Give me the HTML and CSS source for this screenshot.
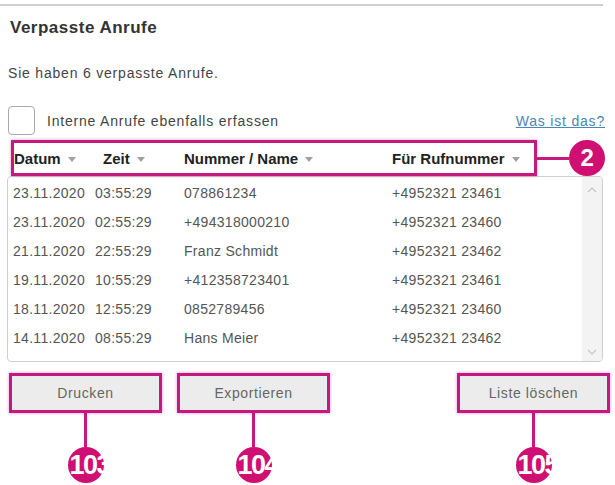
FILE: index.html
```html
<!DOCTYPE html>
<html lang="de">
<head>
    <meta charset="UTF-8">
    <meta name="viewport" content="width=device-width, initial-scale=1.0">
    <title>Verpasste Anrufe</title>
    <link rel="stylesheet" href="styles.css">
</head>
<body>
    <div class="topline"></div>
    <div class="screen">
        <h1 class="title">Verpasste Anrufe</h1>
        <p class="info">Sie haben 6 verpasste Anrufe.</p>

        <div class="optionRow">
            <label class="option"><span class="checkbox"></span>Interne Anrufe ebenfalls erfassen</label>
            <a class="help" href="#">Was ist das?</a>
        </div>

        <!-- table header with callout 2 -->
        <div class="headRow">
            <div class="tableHead">
                <span class="col">Datum<i class="sort"></i></span>
                <span class="col">Zeit<i class="sort"></i></span>
                <span class="col">Nummer / Name<i class="sort"></i></span>
                <span class="col">Für Rufnummer<i class="sort"></i></span>
            </div>
            <div class="hline"></div>
            <div class="badge">2</div>
        </div>

        <div class="list">
            <div class="rows">
                <div class="row"><span>23.11.2020</span><span>03:55:29</span><span>078861234</span><span>+4952321 23461</span></div>
                <div class="row"><span>23.11.2020</span><span>02:55:29</span><span>+494318000210</span><span>+4952321 23460</span></div>
                <div class="row"><span>21.11.2020</span><span>22:55:29</span><span>Franz Schmidt</span><span>+4952321 23462</span></div>
                <div class="row"><span>19.11.2020</span><span>10:55:29</span><span>+412358723401</span><span>+4952321 23461</span></div>
                <div class="row"><span>18.11.2020</span><span>12:55:29</span><span>0852789456</span><span>+4952321 23460</span></div>
                <div class="row"><span>14.11.2020</span><span>08:55:29</span><span>Hans Meier</span><span>+4952321 23462</span></div>
            </div>
            <div class="scrollbar">
                <svg class="chev" width="10" height="6" viewBox="0 0 10 6"><path d="M1 5 L5 1 L9 5" fill="none" stroke="#c4c4c4" stroke-width="1.2"/></svg>
                <svg class="chev" width="10" height="6" viewBox="0 0 10 6"><path d="M1 1 L5 5 L9 1" fill="none" stroke="#c4c4c4" stroke-width="1.2"/></svg>
            </div>
        </div>

        <div class="actions">
            <div class="action print">
                <button class="btn">Drucken</button>
                <div class="stem"></div>
                <div class="badge small">103</div>
            </div>
            <div class="action export">
                <button class="btn">Exportieren</button>
                <div class="stem"></div>
                <div class="badge small">104</div>
            </div>
            <div class="action clear">
                <button class="btn">Liste löschen</button>
                <div class="stem"></div>
                <div class="badge small">105</div>
            </div>
        </div>
    </div>
</body>
</html>
```

FILE: styles.css
```css
body{
    margin: 0;
    background: #fff;
    font-family: "Liberation Sans", Arial, sans-serif;
    color: #444;
}
.topline{
    height: 2px;
    margin: 4px 12px 0 0;
    background: #cfcfcf;
}
.screen{
    padding: 0 10px 0 8px;
}
.title{
    margin: 12px 0 0 2px;
    font-size: 17px;
    line-height: 20px;
    letter-spacing: 0.5px;
    font-weight: bold;
    color: #333;
}
.info{
    margin: 26px 0 0 0;
    font-size: 14px;
    line-height: 18px;
    letter-spacing: 0.8px;
}

.optionRow{
    margin-top: 24px;
    height: 29px;
    display: flex;
    align-items: center;
    justify-content: space-between;
}
.option{
    display: flex;
    align-items: center;
    font-size: 14px;
    letter-spacing: 0.8px;
}
.checkbox{
    width: 25px;
    height: 27px;
    border: 1px solid #aaa;
    border-radius: 4px;
    background: #fff;
    margin-right: 12px;
}
.help{
    font-size: 14px;
    color: #4a87b3;
    letter-spacing: 0.8px;
}

.headRow{
    margin-top: 5px;
    display: flex;
    align-items: center;
    padding-left: 3px;
}
.tableHead{
    width: 526px;
    height: 30px;
    border: 3px solid #c5197d;
    box-shadow: 0 0 3px rgba(197, 25, 125, 0.45);
    display: grid;
    grid-template-columns: 89px 81px 208px 1fr;
    align-items: center;
    font-size: 15px;
    font-weight: bold;
    color: #222;
}
.col{
    white-space: nowrap;
}
.sort{
    display: inline-block;
    margin-left: 7px;
    vertical-align: middle;
    border-left: 4px solid transparent;
    border-right: 4px solid transparent;
    border-top: 5px solid #a0a0a0;
}
.hline{
    width: 33px;
    height: 3px;
    background: #c5197d;
}
.badge{
    width: 36px;
    height: 36px;
    border-radius: 50%;
    background: #cf0f72;
    color: #fff;
    font-size: 24px;
    font-weight: bold;
    display: flex;
    align-items: center;
    justify-content: center;
}

.list{
    margin-left: -1px;
    width: 594px;
    height: 184px;
    border: 1px solid #cfcfcf;
    border-radius: 4px;
    background: #fff;
    display: flex;
    overflow: hidden;
}
.rows{
    flex: 1;
    padding: 1px 0 0 5px;
}
.row{
    height: 29px;
    display: grid;
    grid-template-columns: 82px 89px 208px 1fr;
    align-items: center;
    font-size: 14px;
    letter-spacing: 0.3px;
    color: #555;
    white-space: nowrap;
}
.scrollbar{
    width: 20px;
    background: #f3f3f3;
    display: flex;
    flex-direction: column;
    align-items: center;
    justify-content: space-between;
    padding: 10px 0 6px;
}

.actions{
    margin-top: 11px;
    display: flex;
    margin-left: 1px;
}
.action{
    display: flex;
    flex-direction: column;
    align-items: center;
    width: 153px;
}
.export{
    margin-left: 15px;
}
.clear{
    margin-left: auto;
    margin-right: -5px;
}
.btn{
    width: 153px;
    height: 40px;
    border: 3px solid #c5197d;
    box-shadow: 0 0 3px rgba(197, 25, 125, 0.45);
    background: #ececec;
    font-family: inherit;
    font-size: 14px;
    color: #666;
    letter-spacing: 0.6px;
}
.stem{
    width: 3px;
    height: 34px;
    background: #c5197d;
}
.badge.small{
    justify-content: flex-start;
    padding-left: 2px;
    box-sizing: border-box;
    letter-spacing: -1.5px;
    font-size: 27px;
    white-space: nowrap;
}
```
